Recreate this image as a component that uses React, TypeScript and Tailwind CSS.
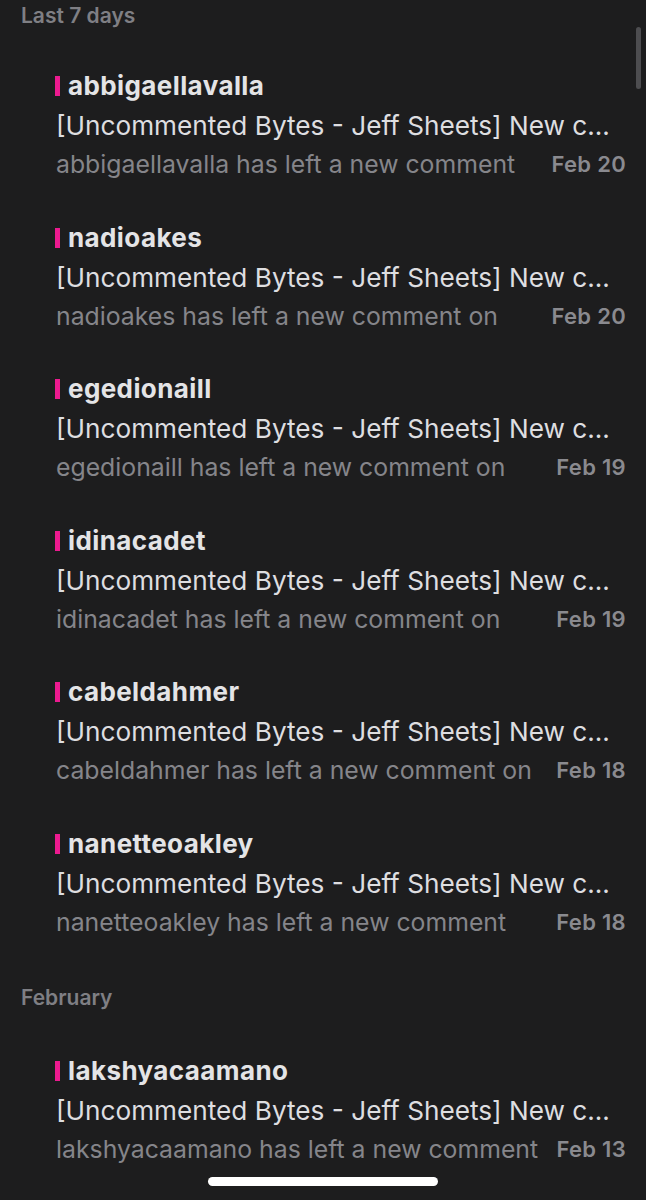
import React from "react";

type Item = { name: string; preview: string; date: string };

const week: Item[] = [
  { name: "abbigaellavalla", preview: "abbigaellavalla has left a new comment", date: "Feb 20" },
  { name: "nadioakes", preview: "nadioakes has left a new comment on", date: "Feb 20" },
  { name: "egedionaill", preview: "egedionaill has left a new comment on", date: "Feb 19" },
  { name: "idinacadet", preview: "idinacadet has left a new comment on", date: "Feb 19" },
  { name: "cabeldahmer", preview: "cabeldahmer has left a new comment on", date: "Feb 18" },
  { name: "nanetteoakley", preview: "nanetteoakley has left a new comment", date: "Feb 18" },
];

const feb: Item[] = [
  { name: "lakshyacaamano", preview: "lakshyacaamano has left a new comment", date: "Feb 13" },
];

function Row({ item }: { item: Item }) {
  return (
    <div className="h-[151.6px] pt-[34px] pl-[55px] pr-[20px]">
      <div className="flex items-center h-[40px]">
        <span className="w-[5px] h-[20px] bg-[#ec1a8f] mr-[8px] shrink-0" />
        <span className="text-[26px] font-bold text-[#e4e4e6] leading-[40px] tracking-[0.4px]">{item.name}</span>
      </div>
      <div className="h-[40px] leading-[40px] text-[26.2px] text-[#dedee0] whitespace-nowrap pl-[1px]">
        [Uncommented Bytes - Jeff Sheets] New c...
      </div>
      <div className="flex items-center justify-between h-[36px] pl-[1px]">
        <span className="text-[24.8px] text-[#85858a] leading-[36px] whitespace-nowrap">{item.preview}</span>
        <span className="text-[22px] font-semibold text-[#8a8a8f] leading-[36px] whitespace-nowrap tracking-[0.3px]">{item.date}</span>
      </div>
    </div>
  );
}

export default function App() {
  return (
    <div
      className="relative w-[646px] h-[1200px] overflow-hidden bg-[#1d1d1e]"
      style={{ fontFamily: "Inter, 'Noto Sans', 'Liberation Sans', sans-serif" }}
    >
      <div className="h-[32px] pl-[21px] leading-[32px] text-[21px] font-semibold text-[#7f7f84]">Last 7 days</div>
      {week.map((it) => (
        <Row key={it.name} item={it} />
      ))}
      <div className="mt-[40px] mb-[3px] h-[32px] pl-[21px] leading-[32px] text-[21px] font-semibold text-[#7f7f84]">February</div>
      {feb.map((it) => (
        <Row key={it.name} item={it} />
      ))}
      <div className="absolute right-[5px] top-[27px] w-[5px] h-[62px] rounded-full bg-[#4d4d50]" />
      <div className="absolute left-[208px] top-[1177px] w-[230px] h-[9px] rounded-full bg-white" />
    </div>
  );
}
